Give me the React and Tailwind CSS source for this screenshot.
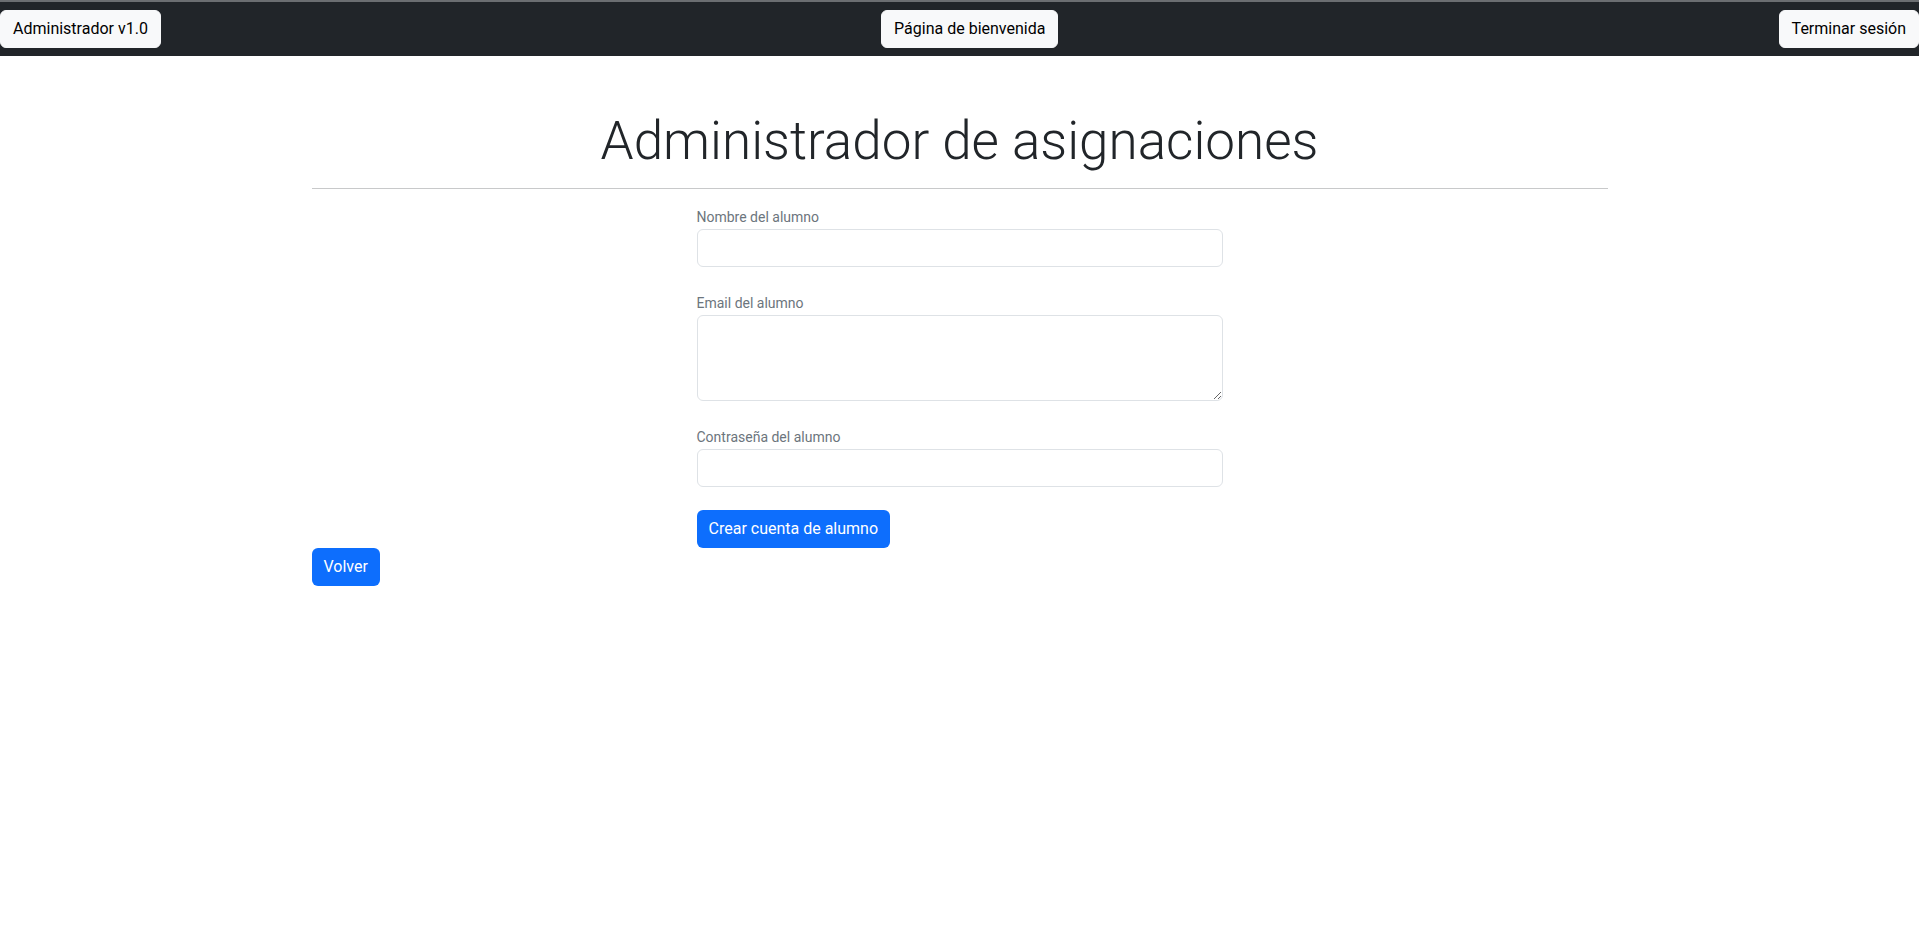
import React from 'react';

const font = { fontFamily: 'Roboto, "Noto Sans", "Liberation Sans", sans-serif' };

// Botón claro de la barra superior
const NavBoton = ({ children }) => (
  <button className="h-[38px] px-3 rounded-[6px] bg-[#f8f9fa] text-[16px] text-[#000] leading-[24px] border border-[#f8f9fa]">
    {children}
  </button>
);

const Campo = ({ label, area }) => (
  <div>
    <label className="block text-[14px] leading-[21px] text-[#6c757d] mb-px">{label}</label>
    {area ? (
      <textarea className="block w-full h-[86px] rounded-[6px] border border-[#dee2e6] bg-white px-3 py-1.5 outline-none" />
    ) : (
      <input type="text" className="block w-full h-[38px] rounded-[6px] border border-[#dee2e6] bg-white px-3 outline-none" />
    )}
  </div>
);

export default function App() {
  return (
    <div className="min-h-screen bg-white text-[#212529]" style={font}>
      <nav className="flex items-center justify-between bg-[#212529] border-t-2 border-[#6b6e71] py-2">
        <NavBoton>Administrador v1.0</NavBoton>
        <NavBoton>Página de bienvenida</NavBoton>
        <NavBoton>Terminar sesión</NavBoton>
      </nav>

      <main className="w-[1296px] mx-auto">
        <h1 className="mt-[53px] text-center text-[53px] font-light leading-[65px] text-[#212529]">
          Administrador de asignaciones
        </h1>
        <hr className="mt-[14px] border-0 border-t border-[#c8c9ca]" />

        <form className="w-[526px] mx-auto pt-[18px] flex flex-col gap-[26px]" onSubmit={(e) => e.preventDefault()}>
          <Campo label="Nombre del alumno" />
          <Campo label="Email del alumno" area />
          <Campo label="Contraseña del alumno" />
        </form>
        <div className="w-[526px] mx-auto mt-[23px]">
          <button className="h-[38px] px-3 rounded-[6px] bg-[#0d6efd] text-white text-[16px] leading-[24px]">
            Crear cuenta de alumno
          </button>
        </div>
        <button className="h-[38px] px-3 rounded-[6px] bg-[#0d6efd] text-white text-[16px] leading-[24px]">
          Volver
        </button>
      </main>
    </div>
  );
}
